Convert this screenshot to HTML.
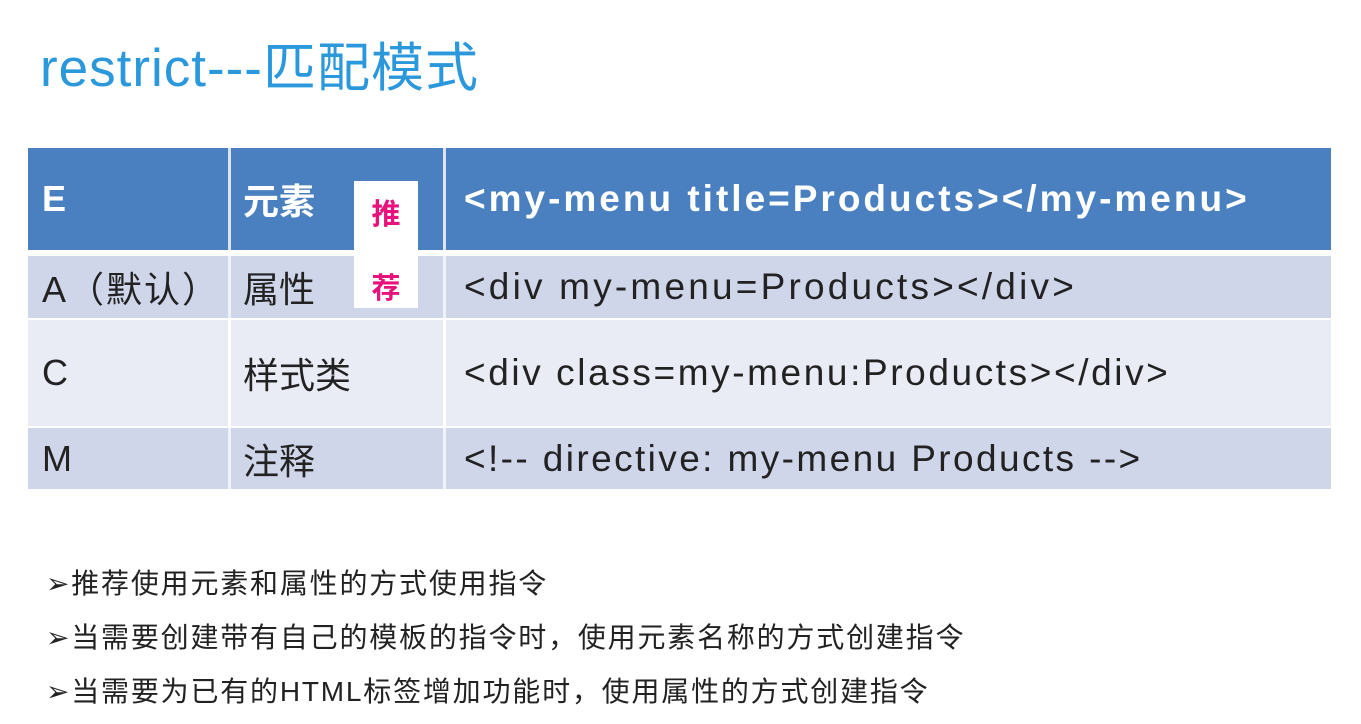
<!DOCTYPE html>
<html><head><meta charset="utf-8"><style>
body{margin:0;width:1361px;height:724px;background:#fff;position:relative;overflow:hidden;font-family:"Liberation Sans","Noto Sans CJK SC",sans-serif}
.t{position:absolute;left:40px;top:26px;font-size:53px;color:#2a98db;letter-spacing:1px}
.r{position:absolute;left:28px;width:1303px}
.c{position:absolute;top:0;bottom:0;display:flex;align-items:center;font-size:36px;color:#222}
.w{font-size:37px;letter-spacing:2.6px}
.h .c{color:#fff;font-weight:bold}
.v{position:absolute;top:0;bottom:0;width:3px;background:#f0f2f8}
.b{position:absolute;left:46px;font-size:28px;color:#222;letter-spacing:1.8px}
</style></head><body>
<div class="t">restrict---匹配模式</div>
<div class="r h" style="top:148px;height:102px;background:#4a80bf">
<div class="c" style="left:14px">E</div><div class="c" style="left:215px">元素</div><div class="c w" style="left:436px;letter-spacing:3px">&lt;my-menu title=Products&gt;&lt;/my-menu&gt;</div>
<div class="v" style="left:200px;background:#dbe4f0"></div><div class="v" style="left:415px;background:#dbe4f0"></div></div>
<div class="r" style="top:256px;height:62px;background:#d0d6ea">
<div class="c" style="left:14px;letter-spacing:2px">A（默认）</div><div class="c" style="left:215px">属性</div><div class="c w" style="left:436px;letter-spacing:3.2px">&lt;div my-menu=Products&gt;&lt;/div&gt;</div>
<div class="v" style="left:200px"></div><div class="v" style="left:415px"></div></div>
<div class="r" style="top:320px;height:106px;background:#e9ebf5">
<div class="c" style="left:14px">C</div><div class="c" style="left:215px">样式类</div><div class="c w" style="left:436px">&lt;div class=my-menu:Products&gt;&lt;/div&gt;</div>
<div class="v" style="left:200px;background:#fff"></div><div class="v" style="left:415px;background:#fff"></div></div>
<div class="r" style="top:428px;height:61px;background:#d0d6ea">
<div class="c" style="left:14px">M</div><div class="c" style="left:215px">注释</div><div class="c w" style="left:436px;letter-spacing:2.4px">&lt;!-- directive: my-menu Products --&gt;</div>
<div class="v" style="left:200px"></div><div class="v" style="left:415px"></div></div>
<div style="position:absolute;left:354px;top:181px;width:64px;height:127px;background:#fff;color:#e8127c;font-size:29px;font-weight:bold;text-align:center">
<div style="position:absolute;top:10px;width:64px">推</div><div style="position:absolute;top:84px;width:64px">荐</div></div>
<div class="b" style="top:562px">➢推荐使用元素和属性的方式使用指令</div>
<div class="b" style="top:616px">➢当需要创建带有自己的模板的指令时，使用元素名称的方式创建指令</div>
<div class="b" style="top:670px">➢当需要为已有的HTML标签增加功能时，使用属性的方式创建指令</div>
</body></html>
